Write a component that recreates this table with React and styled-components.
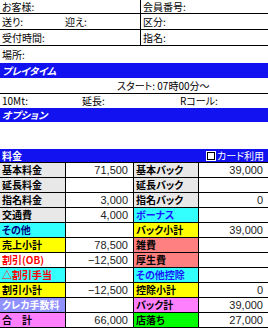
import React from 'react';
import styled, { createGlobalStyle } from 'styled-components';

const GlobalStyle = createGlobalStyle`
  body {
    margin: 0;
    background: #fff;
  }
`;

const Page = styled.div`
  width: 268px;
  height: 328px;
  overflow: hidden;
  font-family: "Noto Sans CJK JP", "Noto Sans", sans-serif;
  font-size: 10px;
  line-height: 1;
  font-feature-settings: "palt";
  color: #000;
  background: #fff;
`;

const InfoRow = styled.div`
  display: grid;
  grid-template-columns: ${(p) => (p.$split ? '140px 1fr' : '1fr')};
  height: ${(p) => p.$h}px;
  box-sizing: border-box;
  border-bottom: ${(p) => (p.$line ? '1px solid #000' : 'none')};
`;

const InfoCell = styled.div`
  display: flex;
  align-items: center;
  padding-left: 2px;
  border-left: ${(p) => (p.$divider ? '1px solid #000' : 'none')};
`;

const Field = styled.span`
  width: ${(p) => (p.$w ? `${p.$w}px` : 'auto')};
`;

const Bar = styled.div`
  display: flex;
  align-items: center;
  justify-content: space-between;
  height: ${(p) => p.$h}px;
  margin-top: ${(p) => p.$mt || 0}px;
  padding: 0 4px 0 2px;
  background: #1212f0;
  color: #fff;
  font-weight: bold;
  font-style: ${(p) => (p.$italic ? 'italic' : 'normal')};
`;

const CardToggle = styled.label`
  display: flex;
  align-items: center;
  gap: 2px;
  font-weight: normal;
  font-style: normal;
`;

const CheckBox = styled.span`
  width: 6px;
  height: 6px;
  background: #fff;
  border: 1px solid #000;
  outline: 1px solid #fff;
`;

const StartRow = styled.div`
  display: flex;
  align-items: center;
  height: 16px;
  box-sizing: border-box;
  padding-left: 117px;
  border-bottom: 1px solid #000;
`;

const OptionRow = styled.div`
  display: grid;
  grid-template-columns: 80px 98px 1fr;
  align-items: center;
  height: 14px;
  padding-left: 2px;
`;

const Table = styled.div`
  display: grid;
  grid-template-columns: 66px 68px 65px 69px;
  grid-auto-rows: 15px;
  border-top: 1px solid #000;
`;

const LabelCell = styled.div`
  display: flex;
  align-items: center;
  padding-left: 2px;
  box-sizing: border-box;
  background: ${(p) => p.$bg};
  color: ${(p) => p.$fg};
  font-weight: bold;
  white-space: nowrap;
  overflow: hidden;
  border-right: 1px solid #000;
  border-bottom: 1px solid #000;
`;

const ValueCell = styled.div`
  display: flex;
  align-items: center;
  justify-content: flex-end;
  padding-right: 5px;
  box-sizing: border-box;
  background: #fff;
  font-family: "Liberation Sans", Arial, sans-serif;
  font-size: 11px;
  color: #222;
  border-right: ${(p) => (p.$last ? 'none' : '1px solid #000')};
  border-bottom: 1px solid #000;
`;

const GREY = '#e8e8e8';
const CYAN = '#33ffff';
const YELLOW = '#ffff00';
const SALMON = '#ff8080';
const SLATE = '#9090ff';
const VIOLET = '#ff80ff';
const GREEN = '#00ff00';

const rows = [
  [['基本料金', GREY, '#000', '71,500'], ['基本バック', GREY, '#000', '39,000']],
  [['延長料金', GREY, '#000', ''], ['延長バック', GREY, '#000', '']],
  [['指名料金', GREY, '#000', '3,000'], ['指名バック', GREY, '#000', '0']],
  [['交通費', GREY, '#000', '4,000'], ['ボーナス', CYAN, '#1a1aff', '']],
  [['その他', CYAN, '#000080', ''], ['バック小計', YELLOW, '#000', '39,000']],
  [['売上小計', YELLOW, '#000', '78,500'], ['雑費', SALMON, '#000', '']],
  [['割引(OB)', '#fff', '#ff0000', '−12,500'], ['厚生費', SALMON, '#000', '']],
  [['△割引手当', CYAN, '#ff0000', ''], ['その他控除', CYAN, '#1a1aff', '']],
  [['割引小計', YELLOW, '#000', '−12,500'], ['控除小計', YELLOW, '#000', '0']],
  [['クレカ手数料', SLATE, '#fff', ''], ['バック計', VIOLET, '#000', '39,000']],
  [['合　計', VIOLET, '#000', '66,000'], ['店落ち', GREEN, '#000', '27,000']],
];

export default function App() {
  return (
    <Page>
      <GlobalStyle />
      <InfoRow $split $line $h={14}>
        <InfoCell>お客様:</InfoCell>
        <InfoCell $divider>会員番号:</InfoCell>
      </InfoRow>
      <InfoRow $split $line $h={16}>
        <InfoCell>
          <Field $w={63}>送り:</Field>
          <Field>迎え:</Field>
        </InfoCell>
        <InfoCell $divider>区分:</InfoCell>
      </InfoRow>
      <InfoRow $split $line $h={16}>
        <InfoCell>受付時間:</InfoCell>
        <InfoCell $divider>指名:</InfoCell>
      </InfoRow>
      <InfoRow $h={17}>
        <InfoCell>場所:</InfoCell>
      </InfoRow>

      <Bar $h={15} $italic>プレイタイム</Bar>
      <StartRow>スタート: 07時00分～</StartRow>
      <OptionRow>
        <span>10Mt:</span>
        <span>延長:</span>
        <span>Rコール:</span>
      </OptionRow>
      <Bar $h={14} $italic>オプション</Bar>

      <Bar $h={13} $mt={27}>
        料金
        <CardToggle>
          <CheckBox />
          カード利用
        </CardToggle>
      </Bar>
      <Table>
        {rows.map((pair, i) => (
          <React.Fragment key={i}>
            {pair.map(([label, bg, fg, value], j) => (
              <React.Fragment key={j}>
                <LabelCell $bg={bg} $fg={fg}>{label}</LabelCell>
                <ValueCell $last={j === 1}>{value}</ValueCell>
              </React.Fragment>
            ))}
          </React.Fragment>
        ))}
      </Table>
    </Page>
  );
}
